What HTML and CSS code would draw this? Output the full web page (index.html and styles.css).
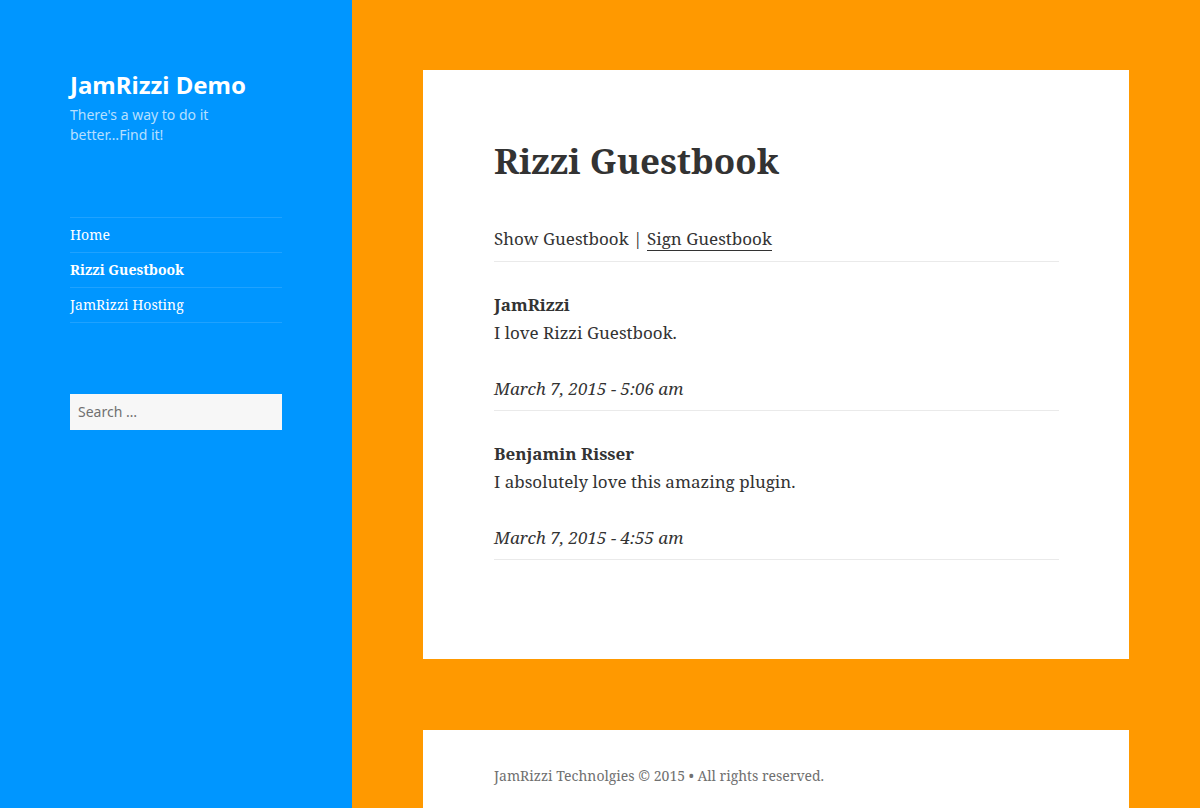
FILE: index.html
```html
<!DOCTYPE html>
<html lang="en">
<head>
<meta charset="utf-8">
<title>Rizzi Guestbook – JamRizzi Demo</title>
<link rel="stylesheet" href="styles.css">
</head>
<body>
<div class="page">
  <aside class="sidebar">
    <header class="site-header">
      <p class="site-title">JamRizzi Demo</p>
      <p class="site-description">There's a way to do it better…Find it!</p>
    </header>
    <nav class="main-nav">
      <ul>
        <li><a href="#">Home</a></li>
        <li class="current"><a href="#">Rizzi Guestbook</a></li>
        <li><a href="#">JamRizzi Hosting</a></li>
      </ul>
    </nav>
    <form class="search-form">
      <input class="search-field" type="search" placeholder="Search …">
    </form>
  </aside>
  <main class="content">
    <article class="card entry">
      <h1 class="entry-title">Rizzi Guestbook</h1>
      <div class="gb-links">
        <span>Show Guestbook</span> | <a href="#" class="gb-sign">Sign Guestbook</a>
      </div>
      <div class="gb-entry">
        <div class="gb-name">JamRizzi</div>
        <div class="gb-msg">I love Rizzi Guestbook.</div>
        <div class="gb-date">March 7, 2015 - 5:06 am</div>
      </div>
      <div class="gb-entry">
        <div class="gb-name">Benjamin Risser</div>
        <div class="gb-msg">I absolutely love this amazing plugin.</div>
        <div class="gb-date">March 7, 2015 - 4:55 am</div>
      </div>
    </article>
    <footer class="card footer">
      <p>JamRizzi Technolgies © 2015 • All rights reserved.</p>
    </footer>
  </main>
</div>
</body>
</html>
```
FILE: styles.css
```css
html, body {
  margin: 0;
  padding: 0;
}
body {
  background: #ff9900;
  color: #333333;
  font-family: "Noto Serif", "DejaVu Serif", serif;
  height: 808px;
  overflow: hidden;
}
.page {
  display: flex;
  min-height: 808px;
}
.sidebar {
  width: 352px;
  flex: 0 0 352px;
  background: #0096ff;
  padding: 69px 70px 0;
  box-sizing: border-box;
  min-height: 808px;
}
.site-header p { margin: 0; }
.site-title {
  font-family: "Noto Sans", "Open Sans", sans-serif;
  font-weight: 700;
  font-size: 24px;
  line-height: 31px;
  color: #ffffff;
}
.site-description {
  margin-top: 5px !important;
  font-family: "Noto Sans", "Open Sans", sans-serif;
  font-size: 14px;
  line-height: 20px;
  color: rgba(255,255,255,0.72);
  width: 180px;
}
.main-nav {
  margin-top: 72px;
}
.main-nav ul {
  list-style: none;
  margin: 0;
  padding: 0;
  border-top: 1px solid rgba(255,255,255,0.12);
}
.main-nav li {
  border-bottom: 1px solid rgba(255,255,255,0.12);
  height: 35px;
  box-sizing: border-box;
  padding-bottom: 2px;
  display: flex;
  align-items: center;
}
.main-nav a {
  color: #ffffff;
  text-decoration: none;
  font-size: 14px;
}
.main-nav .current a { font-weight: 700; }
.search-form {
  margin-top: 71px;
}
.search-field {
  width: 212px;
  height: 36px;
  box-sizing: border-box;
  border: 0;
  background: #f7f7f7;
  padding: 0 8px 2px;
  font-family: "Noto Sans", "Open Sans", sans-serif;
  font-size: 14px;
  color: #707070;
  outline: none;
  display: block;
}
.search-field::placeholder { color: #707070; }
.content {
  flex: 1;
  padding: 70px 71px 0 71px;
  display: flex;
  flex-direction: column;
  gap: 71px;
}
.card {
  background: #ffffff;
  width: 706px;
  box-sizing: border-box;
  padding-left: 71px;
  padding-right: 70px;
}
.entry {
  padding-top: 67px;
  padding-bottom: 99px;
}
.entry-title {
  margin: 0;
  font-size: 35px;
  line-height: 47px;
  font-weight: 700;
  color: #333333;
}
.gb-links {
  margin-top: 41px;
  font-size: 17px;
  line-height: 28px;
  padding-bottom: 8px;
  border-bottom: 1px solid #eaeaea;
}
.gb-sign {
  color: #333333;
  text-decoration: none;
  border-bottom: 1px solid #333333;
}
.gb-entry {
  padding-top: 29px;
  padding-bottom: 7px;
  border-bottom: 1px solid #eaeaea;
  font-size: 17px;
  line-height: 28px;
}
.gb-name { font-weight: 700; }
.gb-date {
  margin-top: 28px;
  font-style: italic;
}
.footer {
  padding-top: 35px;
  padding-bottom: 40px;
}
.footer p {
  margin: 0;
  font-size: 14px;
  line-height: 22px;
  color: #707070;
}
```
